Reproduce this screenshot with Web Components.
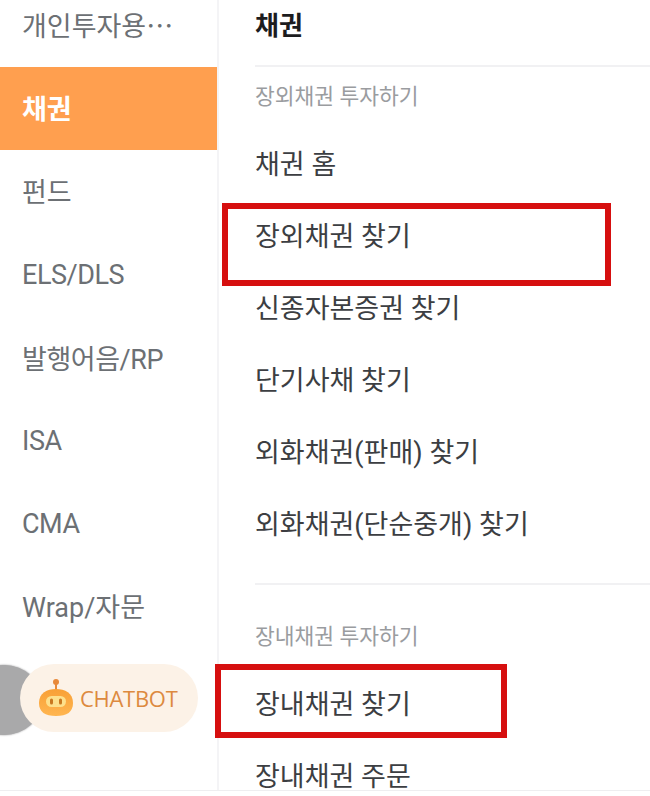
<!DOCTYPE html>
<html lang="ko">
<head>
<meta charset="utf-8">
<style>
  html, body { margin: 0; height: 100%; background: #fff; }
  body { font-family: Roboto, "Noto Sans CJK KR", "Noto Sans", sans-serif; overflow: hidden; }
</style>
</head>
<body>
<menu-screen>
  <side-nav slot="side">
    <side-item style="font-family:'Noto Sans CJK KR',sans-serif">개인투자용…</side-item>
    <side-item active>채권</side-item>
    <side-item>펀드</side-item>
    <side-item latin>ELS/DLS</side-item>
    <side-item latin>발행어음/RP</side-item>
    <side-item latin>ISA</side-item>
    <side-item latin>CMA</side-item>
    <side-item>Wrap/자문</side-item>
  </side-nav>
  <chat-button slot="side"></chat-button>
  <menu-panel title="채권">
    <menu-group label="장외채권 투자하기" divided>
      <menu-link>채권 홈</menu-link>
      <menu-link>장외채권 찾기</menu-link>
      <menu-link>신종자본증권 찾기</menu-link>
      <menu-link>단기사채 찾기</menu-link>
      <menu-link>외화채권(판매) 찾기</menu-link>
      <menu-link>외화채권(단순중개) 찾기</menu-link>
    </menu-group>
    <menu-group label="장내채권 투자하기">
      <menu-link>장내채권 찾기</menu-link>
      <menu-link>장내채권 주문</menu-link>
    </menu-group>
  </menu-panel>
  <red-mark style="left:222px;top:203px;width:389px;height:83px"></red-mark>
  <red-mark style="left:215px;top:664px;width:292px;height:74px"></red-mark>
</menu-screen>

<script>
// page frame: sidebar + panel, the red marks sit on top
class MenuScreen extends HTMLElement {
  constructor() {
    super()
    this.attachShadow({ mode: 'open' })
    this.shadowRoot.innerHTML = `
      <style>
        :host { display: block; position: relative; width: 650px; height: 796px; overflow: hidden; background: #fff; }
        .wrap { display: flex; height: 790px; border-bottom: 1px solid #eeeef0; }
        .side { width: 217px; flex: none; position: relative; border-right: 2px solid #f4f4f6; }
        .main { flex: 1; min-width: 0; }
      </style>
      <div class="wrap">
        <div class="side"><slot name="side"></slot></div>
        <div class="main"><slot></slot></div>
      </div>
    `
  }
}

class SideNav extends HTMLElement {
  constructor() {
    super()
    this.attachShadow({ mode: 'open' })
    this.shadowRoot.innerHTML = `
      <style>
        :host { display: block; margin-top: -16px; }
      </style>
      <slot></slot>
    `
  }
}

class SideItem extends HTMLElement {
  constructor() {
    super()
    this.attachShadow({ mode: 'open' })
    this.shadowRoot.innerHTML = `
      <style>
        :host { display: flex; align-items: center; height: 83px; padding-left: 22px; padding-bottom: 2px; box-sizing: border-box; font-size: 27px; color: #6c7074; white-space: nowrap; }
        :host([active]) { background: #ff9f4f; color: #fff; font-weight: 700; }
        :host([latin]) { padding-bottom: 0; letter-spacing: -0.45px; }
      </style>
      <slot></slot>
    `
  }
}

// chatbot pill and the grey round button cut by the screen edge
class ChatButton extends HTMLElement {
  constructor() {
    super()
    this.attachShadow({ mode: 'open' })
    this.shadowRoot.innerHTML = `
      <style>
        :host { display: block; position: absolute; left: 20px; top: 664px; width: 178px; height: 68px; }
        .circle { position: absolute; left: -54px; top: 1px; width: 76px; height: 70px; border-radius: 50%; background: #a9a9aa; box-shadow: 0 0 2px #88888a; }
        .pill { position: absolute; inset: 0; display: flex; align-items: center; gap: 6px; padding-left: 18px; border-radius: 34px; background: #fcf2e7; color: #dd8a3f; font: 500 22px "Open Sans", "Noto Sans", sans-serif; letter-spacing: -0.3px; }
        svg { flex: none; }
      </style>
      <div class="circle"></div>
      <div class="pill">
        <svg width="36" height="40" viewBox="0 0 36 40">
          <defs>
            <linearGradient id="body" x1="0" y1="0" x2="0" y2="1">
              <stop offset="0" stop-color="#f8a036"/>
              <stop offset="1" stop-color="#ffb650"/>
            </linearGradient>
          </defs>
          <circle cx="18" cy="4" r="3" fill="#e8893a"/>
          <rect x="17" y="5" width="2" height="8" fill="#e8893a"/>
          <path d="M18 11C27 11 35 15 35 25C35 34 29 38 18 38C7 38 1 34 1 25C1 15 9 11 18 11Z" fill="url(#body)"/>
          <rect x="8" y="18" width="20" height="11" rx="5.5" fill="#fde08c"/>
          <rect x="12" y="20.5" width="3" height="6" rx="1.5" fill="#c9781f"/>
          <rect x="21" y="20.5" width="3" height="6" rx="1.5" fill="#c9781f"/>
        </svg>
        <span>CHATBOT</span>
      </div>
    `
  }
}

class MenuPanel extends HTMLElement {
  constructor() {
    super()
    this.attachShadow({ mode: 'open' })
    this.shadowRoot.innerHTML = `
      <style>
        :host { display: block; padding-left: 36px; }
        h2 { margin: 0; height: 65px; line-height: 52px; font-size: 26px; font-weight: 700; color: #1c1c1e; border-bottom: 2px solid #f1f1f3; }
      </style>
      <h2></h2>
      <slot></slot>
    `
    this.shadowRoot.querySelector('h2').textContent = this.getAttribute('title')
  }
}

class MenuGroup extends HTMLElement {
  constructor() {
    super()
    this.attachShadow({ mode: 'open' })
    this.shadowRoot.innerHTML = `
      <style>
        :host { display: block; }
        :host([divided]) { height: 518px; box-sizing: border-box; border-bottom: 2px solid #f1f1f3; }
        .label { height: 60px; line-height: 60px; font-size: 21.5px; color: #9a9c9f; }
        :host(:not([divided])) .label { height: 82px; line-height: 103px; }
      </style>
      <div class="label"></div>
      <slot></slot>
    `
    this.shadowRoot.querySelector('.label').textContent = this.getAttribute('label')
  }
}

class MenuLink extends HTMLElement {
  constructor() {
    super()
    this.attachShadow({ mode: 'open' })
    this.shadowRoot.innerHTML = `
      <style>
        :host { display: flex; align-items: center; height: 72px; padding-bottom: 2px; box-sizing: border-box; font-size: 27px; color: #3c3e42; white-space: nowrap; }
      </style>
      <slot></slot>
    `
  }
}

// red annotation box drawn over the screenshot
class RedMark extends HTMLElement {
  constructor() {
    super()
    this.attachShadow({ mode: 'open' })
    this.shadowRoot.innerHTML = `
      <style>
        :host { display: block; position: absolute; box-sizing: border-box; border: 6px solid #d60f0f; }
      </style>
    `
  }
}

customElements.define('menu-screen', MenuScreen)
customElements.define('side-nav', SideNav)
customElements.define('side-item', SideItem)
customElements.define('chat-button', ChatButton)
customElements.define('menu-panel', MenuPanel)
customElements.define('menu-group', MenuGroup)
customElements.define('menu-link', MenuLink)
customElements.define('red-mark', RedMark)
</script>
</body>
</html>
